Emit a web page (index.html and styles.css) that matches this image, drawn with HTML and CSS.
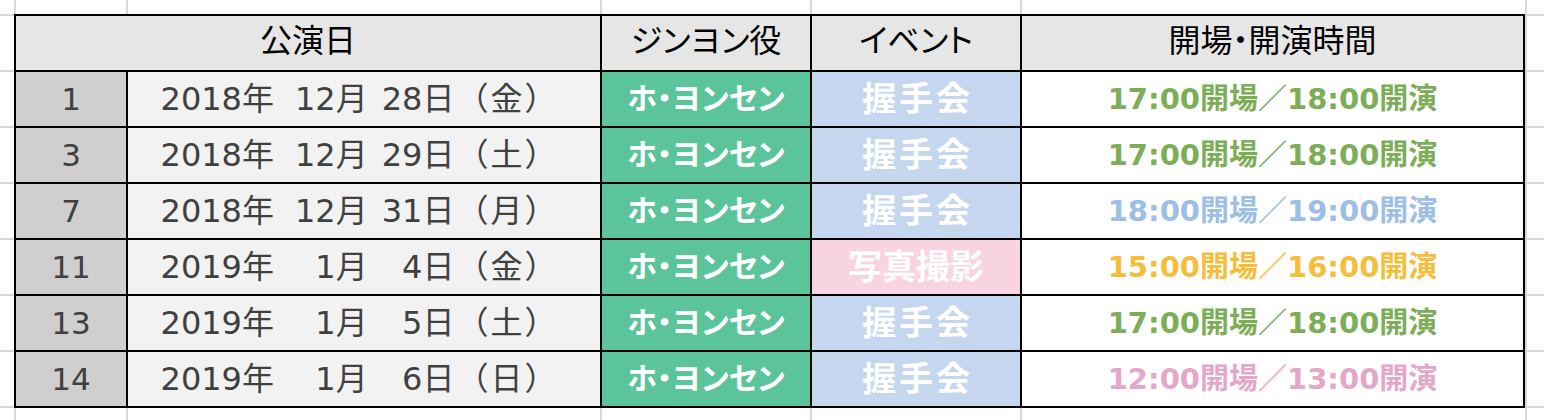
FILE: index.html
```html
<!DOCTYPE html>
<html lang="ja">
<head>
<meta charset="utf-8">
<title>公演日</title>
<link rel="stylesheet" href="styles.css">
</head>
<body>
<div class="sheet">
  <div class="table">
    <div class="c head span2">公演日</div>
    <div class="c head">ジンヨン役</div>
    <div class="c head">イベント</div>
    <div class="c head">開場・開演時間</div>

    <div class="c num">1</div>
    <div class="c date"><span>2018</span><span class="k">年</span><span class="n2">12</span><span class="k">月</span><span class="n2 d">28</span><span class="k">日（金）</span></div>
    <div class="c role">ホ・ヨンセン</div>
    <div class="c ev ev-blue">握手会</div>
    <div class="c time t-green">17:00開場／18:00開演</div>

    <div class="c num">3</div>
    <div class="c date"><span>2018</span><span class="k">年</span><span class="n2">12</span><span class="k">月</span><span class="n2 d">29</span><span class="k">日（土）</span></div>
    <div class="c role">ホ・ヨンセン</div>
    <div class="c ev ev-blue">握手会</div>
    <div class="c time t-green">17:00開場／18:00開演</div>

    <div class="c num">7</div>
    <div class="c date"><span>2018</span><span class="k">年</span><span class="n2">12</span><span class="k">月</span><span class="n2 d">31</span><span class="k">日（月）</span></div>
    <div class="c role">ホ・ヨンセン</div>
    <div class="c ev ev-blue">握手会</div>
    <div class="c time t-blue">18:00開場／19:00開演</div>

    <div class="c num">11</div>
    <div class="c date"><span>2019</span><span class="k">年</span><span class="n2">1</span><span class="k">月</span><span class="n2 d">4</span><span class="k">日（金）</span></div>
    <div class="c role">ホ・ヨンセン</div>
    <div class="c ev ev-pink">写真撮影</div>
    <div class="c time t-orange">15:00開場／16:00開演</div>

    <div class="c num">13</div>
    <div class="c date"><span>2019</span><span class="k">年</span><span class="n2">1</span><span class="k">月</span><span class="n2 d">5</span><span class="k">日（土）</span></div>
    <div class="c role">ホ・ヨンセン</div>
    <div class="c ev ev-blue">握手会</div>
    <div class="c time t-green">17:00開場／18:00開演</div>

    <div class="c num">14</div>
    <div class="c date"><span>2019</span><span class="k">年</span><span class="n2">1</span><span class="k">月</span><span class="n2 d">6</span><span class="k">日（日）</span></div>
    <div class="c role">ホ・ヨンセン</div>
    <div class="c ev ev-blue">握手会</div>
    <div class="c time t-pink">12:00開場／13:00開演</div>
  </div>
</div>
</body>
</html>
```
FILE: styles.css
```css
html, body {
  margin: 0;
  padding: 0;
  background: #fff;
}

body {
  font-family: "DejaVu Sans", "Noto Sans CJK JP", sans-serif;
  font-feature-settings: "palt";
}

.sheet {
  width: 1544px;
  height: 420px;
  box-sizing: border-box;
  padding: 14px 0 0 14px;
  background-color: #fff;
  background-image:
    linear-gradient(#d9d9d9, #d9d9d9),
    linear-gradient(#d9d9d9, #d9d9d9),
    linear-gradient(#d9d9d9, #d9d9d9),
    linear-gradient(#d9d9d9, #d9d9d9),
    linear-gradient(#d9d9d9, #d9d9d9),
    linear-gradient(#d9d9d9, #d9d9d9),
    repeating-linear-gradient(to bottom, #d9d9d9 0 2px, transparent 2px 56px);
  background-size:
    2px 100%, 2px 100%, 2px 100%, 2px 100%, 2px 100%, 2px 100%,
    100% 100%;
  background-position:
    14px 0, 126px 0, 600px 0, 810px 0, 1020px 0, 1525px 0,
    0 14px;
  background-repeat: no-repeat, no-repeat, no-repeat, no-repeat, no-repeat, no-repeat, repeat-y;
}

.table {
  display: grid;
  grid-template-columns: 110px 472px 208px 208px 501px;
  grid-auto-rows: 54px;
  gap: 2px;
  padding: 2px;
  background: #000;
  width: max-content;
}

.c {
  display: flex;
  align-items: center;
  justify-content: center;
  line-height: 1;
  white-space: pre;
}

.span2 {
  grid-column: span 2;
}

.head {
  background: #e7e6e6;
  color: #000;
  font-size: 32px;
  padding-bottom: 4px;
  box-sizing: border-box;
}

.num {
  background: #d0cece;
  color: #404040;
  font-size: 31px;
}

.date {
  background: #f2f2f2;
  color: #404040;
  font-size: 32px;
  font-feature-settings: normal;
  padding-right: 9px;
  box-sizing: border-box;
}

.date .k {
  letter-spacing: 2px;
}

.n2 {
  display: inline-block;
  width: 2ch;
  text-align: right;
  margin-left: 19px;
}

.n2.d {
  margin-left: 12px;
}

.role {
  background: #5bc49a;
  color: #fff;
  font-weight: bold;
  font-size: 30px;
}

.ev {
  color: #fff;
  font-weight: bold;
  font-size: 34px;
}

.ev-blue {
  background: #c4d7ee;
  letter-spacing: 3px;
  padding-left: 3px;
  box-sizing: border-box;
}

.ev-pink {
  background: #f8d4e2;
}

.time {
  background: #fff;
  font-weight: bold;
  font-size: 29px;
}

.t-green { color: #7cae58; }
.t-blue { color: #9dbee5; }
.t-orange { color: #f6bd3b; }
.t-pink { color: #e4a7c8; }
```
